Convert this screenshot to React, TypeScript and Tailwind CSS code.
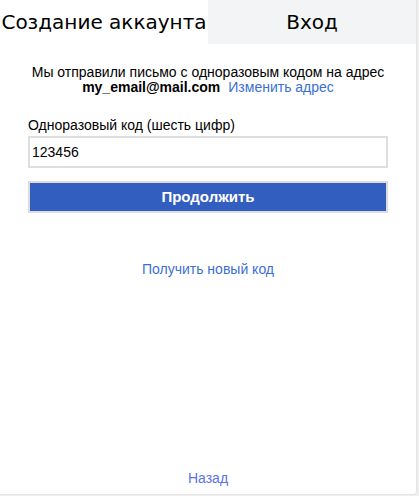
export default function App() {
  return (
    <div className="min-h-[496px] bg-[#eeeeee] font-['Liberation_Sans',Arial,sans-serif]">
      <div className="w-[417px] h-[495px] bg-white border-r border-b border-[#e4e4e4] rounded-br-[3px] flex flex-col">
        <div className="flex h-[44px]">
          <div className="w-[208px] flex items-center justify-center whitespace-nowrap font-['DejaVu_Sans',sans-serif] text-[20px] text-black">
            Создание аккаунта
          </div>
          <div className="flex-1 bg-[#f3f4f6] flex items-center justify-center font-['DejaVu_Sans',sans-serif] text-[20px] text-black">
            Вход
          </div>
        </div>

        <div className="pt-[21px] px-[28px] text-center text-[14px] leading-[15px] text-black">
          <p>Мы отправили письмо с одноразовым кодом на адрес</p>
          <p>
            <span className="font-bold">my_email@mail.com</span>
            <a href="#" className="ml-[8px] text-[#3b6fd6]">
              Изменить адрес
            </a>
          </p>
        </div>

        <div className="px-[28px] pt-[22px]">
          <label className="block text-[14px] leading-[16px] text-black">Одноразовый код (шесть цифр)</label>
          <input
            defaultValue="123456"
            className="mt-[3px] w-full h-[32px] border-2 border-[#dedede] px-[2px] text-[14px] text-black outline-none"
          />
          <button className="mt-[13px] w-full h-[32px] bg-[#325ebf] border-2 border-[#dcdcdc] text-white text-[15px] font-bold">
            Продолжить
          </button>
        </div>

        <div className="mt-[46px] text-center text-[14px]">
          <a href="#" className="text-[#3b6fd6]">
            Получить новый код
          </a>
        </div>

        <div className="mt-auto pb-[5px] text-center text-[14px]">
          <a href="#" className="text-[#5a72e6]">
            Назад
          </a>
        </div>
      </div>
    </div>
  );
}
